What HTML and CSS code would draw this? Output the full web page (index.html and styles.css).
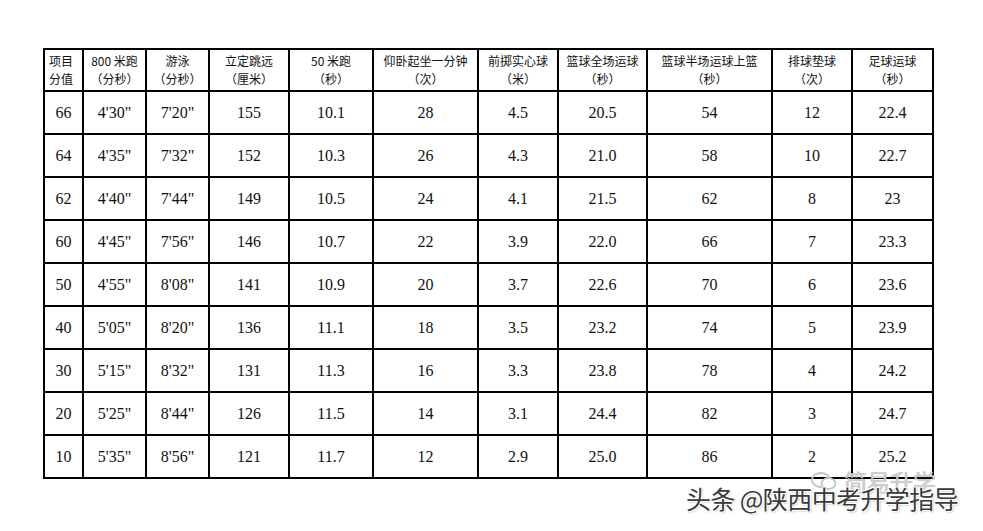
FILE: index.html
```html
<!DOCTYPE html>
<html>
<head>
<meta charset="utf-8">
<link rel="stylesheet" href="styles.css">
</head>
<body>
<div class="page">
<table class="grid">
<colgroup>
<col style="width:39px"><col style="width:63px"><col style="width:63px"><col style="width:80px"><col style="width:84px"><col style="width:105px"><col style="width:80px"><col style="width:89px"><col style="width:125px"><col style="width:80px"><col style="width:81px">
</colgroup>
<thead>
<tr>
<th class="first">项目<br>分值</th>
<th>800 米跑<br>（分秒）</th>
<th>游泳<br>（分秒）</th>
<th>立定跳远<br>（厘米）</th>
<th>50 米跑<br>（秒）</th>
<th>仰卧起坐一分钟<br>（次）</th>
<th>前掷实心球<br>（米）</th>
<th>篮球全场运球<br>（秒）</th>
<th>篮球半场运球上篮<br>（秒）</th>
<th>排球垫球<br>（次）</th>
<th>足球运球<br>（秒）</th>
</tr>
</thead>
<tbody>
<tr><td>66</td><td>4'30"</td><td>7'20"</td><td>155</td><td>10.1</td><td>28</td><td>4.5</td><td>20.5</td><td>54</td><td>12</td><td>22.4</td></tr>
<tr><td>64</td><td>4'35"</td><td>7'32"</td><td>152</td><td>10.3</td><td>26</td><td>4.3</td><td>21.0</td><td>58</td><td>10</td><td>22.7</td></tr>
<tr><td>62</td><td>4'40"</td><td>7'44"</td><td>149</td><td>10.5</td><td>24</td><td>4.1</td><td>21.5</td><td>62</td><td>8</td><td>23</td></tr>
<tr><td>60</td><td>4'45"</td><td>7'56"</td><td>146</td><td>10.7</td><td>22</td><td>3.9</td><td>22.0</td><td>66</td><td>7</td><td>23.3</td></tr>
<tr><td>50</td><td>4'55"</td><td>8'08"</td><td>141</td><td>10.9</td><td>20</td><td>3.7</td><td>22.6</td><td>70</td><td>6</td><td>23.6</td></tr>
<tr><td>40</td><td>5'05"</td><td>8'20"</td><td>136</td><td>11.1</td><td>18</td><td>3.5</td><td>23.2</td><td>74</td><td>5</td><td>23.9</td></tr>
<tr><td>30</td><td>5'15"</td><td>8'32"</td><td>131</td><td>11.3</td><td>16</td><td>3.3</td><td>23.8</td><td>78</td><td>4</td><td>24.2</td></tr>
<tr><td>20</td><td>5'25"</td><td>8'44"</td><td>126</td><td>11.5</td><td>14</td><td>3.1</td><td>24.4</td><td>82</td><td>3</td><td>24.7</td></tr>
<tr><td>10</td><td>5'35"</td><td>8'56"</td><td>121</td><td>11.7</td><td>12</td><td>2.9</td><td>25.0</td><td>86</td><td>2</td><td>25.2</td></tr>
</tbody>
</table>
<div class="mark-logo">
<svg class="mark-icon" width="28" height="22" viewBox="0 0 28 22"><ellipse cx="11" cy="10" rx="9" ry="7" fill="none" stroke="#c4c4c4" stroke-width="1.8"/><ellipse cx="18.5" cy="13.5" rx="7" ry="5.5" fill="#fff" stroke="#c4c4c4" stroke-width="1.8"/></svg>
<span>简易升学</span>
</div>
<div class="mark">头条 @陕西中考升学指导</div>
</div>
</body>
</html>
```
FILE: styles.css
```css
html, body {
  margin: 0;
  padding: 0;
  background: #fff;
}
.page {
  position: relative;
  width: 983px;
  height: 531px;
  padding: 48px 0 0 43px;
  box-sizing: border-box;
}
.grid {
  border-collapse: collapse;
  table-layout: fixed;
  width: 889px;
  border: 2px solid #000;
}
.grid th, .grid td {
  border: 2px solid #000;
  text-align: center;
  padding: 0;
  color: #111;
}
.grid th {
  height: 40px;
  font-family: "Noto Sans CJK SC", "Noto Sans", sans-serif;
  font-size: 12px;
  font-weight: normal;
  line-height: 18px;
}
.grid th.first {
  text-align: left;
  padding-left: 4px;
}
.grid td {
  height: 41px;
  font-family: "Liberation Serif", "Noto Sans CJK SC", serif;
  font-size: 16px;
}
.mark {
  position: absolute;
  left: 686px;
  top: 483px;
  font-family: "Noto Sans CJK SC", sans-serif;
  font-size: 25px;
  line-height: 30px;
  color: #3a3a3a;
  letter-spacing: -0.6px;
  text-shadow: 1px 1px 0 #fff, -1px -1px 0 #fff, 1px -1px 0 #fff, -1px 1px 0 #fff, 1px 1px 2px #888;
  white-space: nowrap;
}
.mark-logo {
  position: absolute;
  left: 810px;
  top: 470px;
  display: flex;
  align-items: center;
  gap: 6px;
  font-family: "Noto Sans CJK SC", sans-serif;
  font-size: 23px;
  line-height: 22px;
  color: #d0d0d0;
  white-space: nowrap;
}
.mark-logo span {
  text-shadow: 0 0 1px #999;
}
```
